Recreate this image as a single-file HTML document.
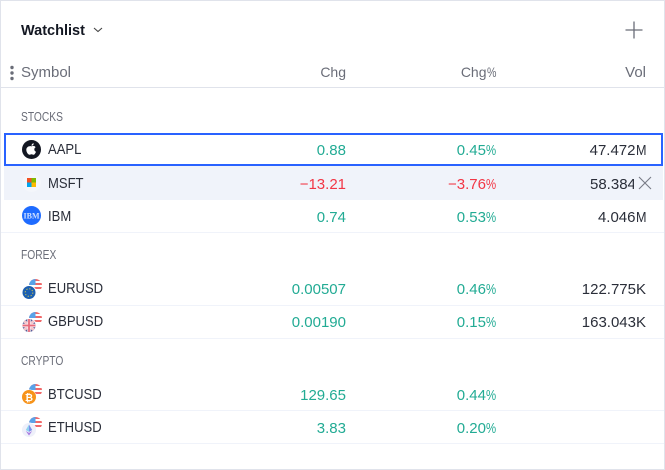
<!DOCTYPE html>
<html><head><meta charset="utf-8">
<style>
html,body{margin:0;padding:0}
body{width:665px;height:470px;overflow:hidden;position:relative;background:#fff;font-family:"Liberation Sans",sans-serif;color:#2a2e39;font-size:15px}
.f{position:absolute}
.t{position:absolute;white-space:nowrap;line-height:18px;height:18px}
.r{text-align:right;width:150px}
.n{font-size:15px;transform:scaleX(.87);transform-origin:0 50%}
.g{color:#22ab94}
.d{color:#f23645}
.h{color:#6a6d78}
.s{color:#6a6d78;font-size:12.500px;transform:scaleX(.82);transform-origin:0 50%}
.p{display:inline-block;width:10px;transform:scaleX(.76);transform-origin:0 50%;text-align:left}
.u{display:inline-block;width:10.500px;transform:scaleX(.84);transform-origin:0 50%;text-align:left}
.line{position:absolute;left:1px;right:1px;height:1px;background:#f0f3fa}
svg{position:absolute}
</style></head><body>
<div class="f" style="left:0;top:0;width:663px;height:468px;border:1px solid #e0e3eb"></div>

<div class="t" style="left:21px;top:22px;font-weight:bold;color:#131722;font-size:14.500px">Watchlist</div>
<svg style="left:93px;top:27px" width="10" height="6"><path d="M1 1l4 3.500L9 1" fill="none" stroke="#444" stroke-width="1.100"/></svg>
<svg style="left:625px;top:21px" width="18" height="18"><path d="M9 .5v17M.5 9h17" stroke="#6a6d78" stroke-width="1.300" fill="none"/></svg>

<svg style="left:9px;top:65px" width="6" height="16"><circle cx="3" cy="2.500" r="1.700" fill="#6a6d78"/><circle cx="3" cy="8" r="1.700" fill="#6a6d78"/><circle cx="3" cy="13.500" r="1.700" fill="#6a6d78"/></svg>
<div class="t h" style="left:21px;top:64px">Symbol</div>
<div class="t h r" style="left:196px;top:63px;font-size:14px">Chg</div>
<div class="t h r" style="left:346px;top:63px;font-size:14px">Chg<span class="p" style="width:9.500px">%</span></div>
<div class="t h r" style="left:496px;top:64px">Vol</div>
<div class="f" style="left:1px;right:1px;top:87px;height:1px;background:#e0e3eb"></div>

<div class="t s" style="left:21px;top:108px">STOCKS</div>

<div class="f" style="left:4px;top:133px;width:655px;height:29px;border:2px solid #2962ff"></div>
<svg style="left:22px;top:140px" width="19" height="19"><circle cx="9.500" cy="9.500" r="9.500" fill="#131722"/><path d="M9.500 6.400c1.100-.7 3.200-.8 4.100.8-1.900 1.100-1.600 3.700.4 4.500-.6 1.500-1.500 3.100-2.600 3.100-.8 0-1.100-.5-1.900-.5s-1.100.5-1.900.5C6 14.800 4.300 12 4.300 9.800c0-2.700 3-4.200 5.200-3.400z M9.500 5.800c0-1.400.9-2.300 2.200-2.500.1 1.400-.9 2.500-2.200 2.500z" fill="#fff"/></svg>
<div class="t n" style="left:48px;top:141px">AAPL</div>
<div class="t g r" style="left:196px;top:142px">0.88</div>
<div class="t g r" style="left:346px;top:142px">0.45<span class="p">%</span></div>
<div class="t r" style="left:496px;top:142px">47.472<span class="u">M</span></div>

<div class="f" style="left:4px;top:166px;width:659px;height:34px;background:#f0f3fa"></div>
<svg style="left:22px;top:173px" width="19" height="19"><circle cx="9.500" cy="9.500" r="9.500" fill="#f4f6fb"/><rect x="5" y="5" width="4.500" height="4.500" fill="#f25022"/><rect x="9.500" y="5" width="4.500" height="4.500" fill="#7fba00"/><rect x="5" y="9.500" width="4.500" height="4.500" fill="#00a4ef"/><rect x="9.500" y="9.500" width="4.500" height="4.500" fill="#ffb900"/></svg>
<div class="t n" style="left:48px;top:175px">MSFT</div>
<div class="t d r" style="left:196px;top:176px">−13.21</div>
<div class="t d r" style="left:346px;top:176px">−3.76<span class="p">%</span></div>
<div class="t" style="left:590px;top:176px;width:44px;overflow:hidden">58.384</div>
<svg style="left:638px;top:176px" width="14" height="14"><path d="M1 1l12 12M13 1L1 13" stroke="#787b86" stroke-width="1.100" fill="none"/></svg>

<svg style="left:22px;top:206px" width="19" height="19"><circle cx="9.500" cy="9.500" r="9.500" fill="#1e6bff"/><text x="9.500" y="12.500" text-anchor="middle" font-family="Liberation Serif,serif" font-size="8" font-weight="bold" fill="#cfe0ff">IBM</text></svg>
<div class="t n" style="left:48px;top:208px">IBM</div>
<div class="t g r" style="left:196px;top:209px">0.74</div>
<div class="t g r" style="left:346px;top:209px">0.53<span class="p">%</span></div>
<div class="t r" style="left:496px;top:209px">4.046<span class="u">M</span></div>
<div class="line" style="top:232px"></div>

<div class="t s" style="left:21px;top:246px">FOREX</div>

<svg style="left:22px;top:279px" width="20" height="22"><defs><clipPath id="u"><circle cx="13.500" cy="6.500" r="6.500"/></clipPath></defs><g clip-path="url(#u)"><rect x="7" width="14" height="14" fill="#fff"/><path d="M7 1h14M7 5h14M7 9h14" stroke="#f0696a" stroke-width="2"/><rect x="7" width="6.500" height="6" fill="#5aa2e8"/></g><circle cx="7" cy="13.500" r="7.500" fill="#fff"/><circle cx="7" cy="13.500" r="6.500" fill="#1c5fb0"/><circle cx="7" cy="13.500" r="3.800" fill="none" stroke="#c9c04e" stroke-width="1" stroke-dasharray="1.300 1.700"/></svg>
<div class="t n" style="left:48px;top:280px">EURUSD</div>
<div class="t g r" style="left:196px;top:281px">0.00507</div>
<div class="t g r" style="left:346px;top:281px">0.46<span class="p">%</span></div>
<div class="t r" style="left:496px;top:281px">122.775K</div>
<div class="line" style="top:305px"></div>

<svg style="left:22px;top:312px" width="20" height="22"><defs><clipPath id="u2"><circle cx="13.500" cy="6.500" r="6.500"/></clipPath><clipPath id="k"><circle cx="7" cy="13.500" r="6.500"/></clipPath></defs><g clip-path="url(#u2)"><rect x="7" width="14" height="14" fill="#fff"/><path d="M7 1h14M7 5h14M7 9h14" stroke="#f0696a" stroke-width="2"/><rect x="7" width="6.500" height="6" fill="#5aa2e8"/></g><circle cx="7" cy="13.500" r="7.500" fill="#fff"/><g clip-path="url(#k)"><rect y="6" width="14" height="15" fill="#4a5a98"/><path d="M0 7l14 13M14 7L0 20" stroke="#f3c5cc" stroke-width="3"/><path d="M7 6v15M0 13.500h14" stroke="#f8e4e6" stroke-width="3.500"/><path d="M7 6v15M0 13.500h14" stroke="#e86a7c" stroke-width="1.800"/></g></svg>
<div class="t n" style="left:48px;top:313px">GBPUSD</div>
<div class="t g r" style="left:196px;top:314px">0.00190</div>
<div class="t g r" style="left:346px;top:314px">0.15<span class="p">%</span></div>
<div class="t r" style="left:496px;top:314px">163.043K</div>
<div class="line" style="top:338px"></div>

<div class="t s" style="left:21px;top:352px">CRYPTO</div>

<svg style="left:22px;top:384px" width="20" height="22"><defs><clipPath id="u3"><circle cx="13.500" cy="6.500" r="6.500"/></clipPath></defs><g clip-path="url(#u3)"><rect x="7" width="14" height="14" fill="#fff"/><path d="M7 1h14M7 5h14M7 9h14" stroke="#f0696a" stroke-width="2"/><rect x="7" width="6.500" height="6" fill="#5aa2e8"/></g><circle cx="7" cy="13" r="7.500" fill="#fff"/><circle cx="7" cy="13" r="7" fill="#f7931a"/><text x="7" y="16.800" text-anchor="middle" font-size="10" font-weight="bold" fill="#fff">₿</text></svg>
<div class="t n" style="left:48px;top:386px">BTCUSD</div>
<div class="t g r" style="left:196px;top:387px">129.65</div>
<div class="t g r" style="left:346px;top:387px">0.44<span class="p">%</span></div>
<div class="line" style="top:410px"></div>

<svg style="left:22px;top:417px" width="20" height="22"><defs><clipPath id="u4"><circle cx="13.500" cy="6.500" r="6.500"/></clipPath></defs><g clip-path="url(#u4)"><rect x="7" width="14" height="14" fill="#fff"/><path d="M7 1h14M7 5h14M7 9h14" stroke="#f0696a" stroke-width="2"/><rect x="7" width="6.500" height="6" fill="#5aa2e8"/></g><circle cx="7" cy="13" r="7.500" fill="#fff"/><circle cx="7" cy="13" r="7" fill="#eef0fa"/><path d="M7 7.500l3.200 5.500-3.200 1.900z" fill="#7b8fe8"/><path d="M7 7.500l-3.200 5.500 3.200 1.900z" fill="#8fd0f0"/><path d="M3.800 14l3.200 4.500 3.200-4.500-3.200 1.900z" fill="#a77be0"/></svg>
<div class="t n" style="left:48px;top:419px">ETHUSD</div>
<div class="t g r" style="left:196px;top:420px">3.83</div>
<div class="t g r" style="left:346px;top:420px">0.20<span class="p">%</span></div>
<div class="line" style="top:443px"></div>
</body></html>
